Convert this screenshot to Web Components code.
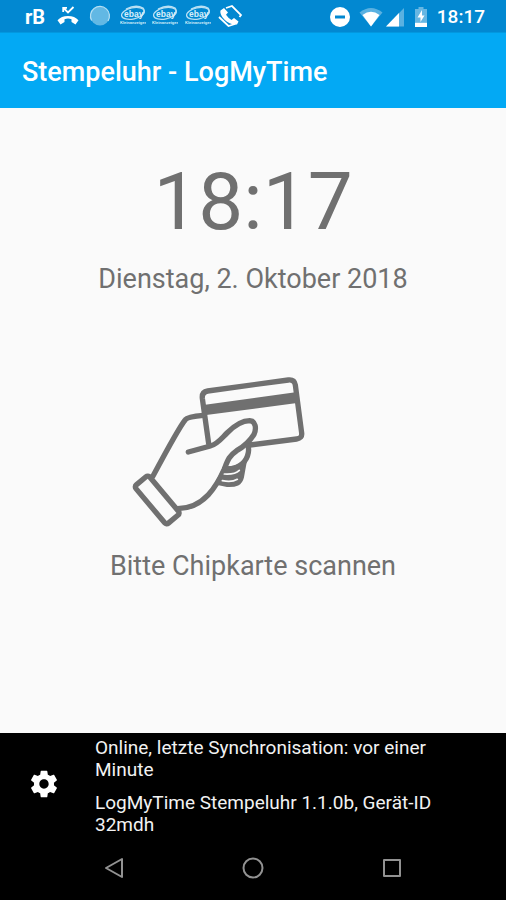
<!DOCTYPE html>
<html lang="de">
<head>
<meta charset="utf-8">
<meta name="viewport" content="width=device-width, initial-scale=1">
<title>Stempeluhr - LogMyTime</title>
<style>
body { margin: 0; background: #fafafa; font-family: Roboto, "Liberation Sans", sans-serif; }
</style>
</head>
<body>
<time-clock-app></time-clock-app>
<script>
const define = (name, html) => {
  const template = document.createElement('template');
  template.innerHTML = html;
  customElements.define(name, class extends HTMLElement {
    constructor() {
      super();
      this.attachShadow({ mode: 'open' }).append(template.content.cloneNode(true));
    }
  });
};

define('ebay-badge', `
<style>
:host { display: block; }
svg { display: block; width: 26px; height: 22px; }
text { font-family: "Liberation Sans", sans-serif; fill: #d9effa; }
</style>
<svg viewBox="0 0 26 22">
  <g fill="none" stroke="#b9e0f4" stroke-width="1.3">
    <ellipse cx="13" cy="8.4" rx="11.6" ry="5.6" transform="rotate(-12 13 8.4)"/>
    <path d="M6 4Q16-1 23 3Q26 7 20 12"/>
  </g>
  <text x="4" y="11.5" font-size="8.5" font-weight="700">ebay</text>
  <text x="0" y="19" font-size="4" font-weight="700">Kleinanzeigen</text>
</svg>`);

define('status-bar', `
<style>
:host { display: flex; justify-content: space-between; align-items: center; height: 32px; padding: 0 21px 0 22px; background: #0288d1; color: #fff; }
.notes { display: flex; justify-content: space-between; align-items: center; width: 221px; }
.notes > * { flex: none; width: 26px; text-align: center; }
.system { display: flex; align-items: center; gap: 5px; padding-top: 2px; }
svg { display: block; fill: currentColor; }
.rb { font-size: 20px; font-weight: 700; line-height: 22px; padding-top: 2px; }
time { font-size: 19px; line-height: 24px; font-weight: 500; }
</style>
<div class="notes">
  <span class="rb">rB</span>
  <svg height="22" viewBox="0 0 26 22"><path d="M13 11C8.500 11 5 12.500 2.500 15.300L5.500 19.500L9.500 17V14.200Q13 13 16.500 14.200V17L20.500 19.500L23.500 15.300C21 12.500 17.500 11 13 11Z"/><path d="M8.200 7V2.800H12M8.500 3L13 7.500L18.500 2" fill="none" stroke="currentColor" stroke-width="1.800"/></svg>
  <svg height="22" viewBox="0 0 26 22"><circle cx="13" cy="11" r="9.500" fill="#62b8e4"/><path d="M4.600 15.500A9.500 9.500 0 1 1 21 16" fill="none" stroke="#b5dff3" stroke-width="1.200"/></svg>
  <ebay-badge></ebay-badge>
  <ebay-badge></ebay-badge>
  <ebay-badge></ebay-badge>
  <svg height="24" viewBox="0 0 26 24"><path d="M9 4L15 2L24 11L22.500 13M2 13L11.500 22L18 20" fill="none" stroke="currentColor" stroke-width="1.800"/><path d="M3.500 6.500L7 4L11 8.500L9 10.800Q11 14 14.500 16L17 14L21.500 17.500L20 20.500C12.500 22 2 12.500 3.500 6.500Z"/></svg>
</div>
<div class="system">
  <svg width="22" height="22" viewBox="0 0 22 22"><path fill-rule="evenodd" d="M11 1A10 10 0 1 0 11 21A10 10 0 1 0 11 1ZM6 9.500H16V12.500H6Z"/></svg>
  <svg width="28" height="22" viewBox="0 0 28 22"><path d="M3.500 6.500Q15-2.500 26.500 6.500L15 20.500Z" opacity=".35"/><path d="M6.500 9Q15 2.500 23.500 9L15 20.500Z"/></svg>
  <svg width="16" height="22" viewBox="4 0 16 22" overflow="visible"><path d="M19 2V20.500H1Z" opacity=".35"/><path d="M14 7V20.500H1Z"/></svg>
  <svg width="22" height="22" viewBox="0 0 22 22"><path d="M5 3H8.500V1H13.500V3H17V16H5Z" opacity=".4"/><path d="M5 16.500H17V21H5ZM12 4L7.500 11.500H10.500V16L14.500 9.500H12Z"/></svg>
  <time>18:17</time>
</div>`);

define('app-bar', `
<style>
:host { display: flex; align-items: center; height: 76px; padding: 0 22px; background: #03a9f4; color: #fff; box-shadow: inset 0 1px #0298df; }
h1 { margin: 0; padding-top: 4px; font-size: 27px; line-height: 32px; font-weight: 500; }
</style>
<h1><slot></slot></h1>`);

define('card-illustration', `
<style>
:host { display: block; }
svg { display: block; width: 266px; height: 170px; }
</style>
<svg viewBox="0 0 798 510" fill="none" stroke="#707070" stroke-width="16" stroke-linecap="round" stroke-linejoin="round" role="img" aria-label="Hand mit Chipkarte">
  <path d="M266 236L247 100Q245 81 263 78L505 45Q523 43 526 60L545 204Q547 220 530 222L390 240"/>
  <path d="M250 120L532 81L537 113L253 151Z" fill="#707070" stroke="none"/>
  <path d="M250 151Q203 155 196 164Q178 185 99 333M205 261L271 243C292 238 303 222 321 204C344 181 369 167 389 167C407 168 410 190 402 208C389 229 376 242 350 257C326 273 322 289 313 312C291 361 253 430 173 431"/>
  <rect x="-27" y="-74" width="54" height="150" rx="8" transform="translate(111 404) rotate(-40)"/>
  <path d="M385 244C389 270 376 296 349 307C333 313 324 312 314 312"/>
  <path d="M376 286L367 336C362 357 348 362 322 361L290 354L314 308L345 311Z" fill="#707070" stroke-width="10"/>
  <path d="M313 327Q345 329 358 316M307 347Q335 353 352 343" stroke="#fafafa" stroke-width="5"/>
</svg>`);

define('clock-panel', `
<style>
:host { display: flex; flex-direction: column; align-items: center; flex: 1; padding: 46px 16px 32px; color: #707070; text-align: center; }
.clock { font-size: 80px; line-height: 96px; }
.date { margin-top: 12px; }
.date, p { font-size: 27px; line-height: 34px; }
card-illustration { margin-top: 69px; }
p { margin: 14px 0 0; }
</style>
<time class="clock">18:17</time>
<time class="date" datetime="2018-10-02">Dienstag, 2. Oktober 2018</time>
<card-illustration></card-illustration>
<p>Bitte Chipkarte scannen</p>`);

define('sync-footer', `
<style>
:host { display: flex; align-items: center; gap: 35px; padding: 4px 64px 0 28px; background: #000; color: #f2f2f2; }
button { flex: none; border: 0; padding: 0 0 6px; background: none; color: #fff; }
svg { display: block; fill: currentColor; }
p { margin: 0; font-size: 19px; line-height: 22px; }
p + p { margin-top: 11px; }
</style>
<button type="button" aria-label="Einstellungen"><svg width="32" height="32" viewBox="0 0 24 24"><path d="M19.430 12.980c.04-.32.07-.64.07-.98s-.03-.66-.07-.98l2.110-1.650c.19-.15.24-.42.12-.64l-2-3.460c-.12-.22-.39-.3-.61-.22l-2.490 1c-.52-.4-1.080-.73-1.690-.98l-.38-2.650C14.460 2.180 14.250 2 14 2h-4c-.25 0-.46.18-.49.42l-.38 2.650c-.61.25-1.170.59-1.690.98l-2.490-1c-.23-.09-.49 0-.61.22l-2 3.460c-.13.22-.07.49.12.64l2.110 1.650c-.04.32-.07.65-.07.98s.03.66.07.98l-2.110 1.650c-.19.15-.24.42-.12.64l2 3.460c.12.22.39.3.61.22l2.490-1c.52.4 1.080.73 1.690.98l.38 2.650c.03.24.24.42.49.42h4c.25 0 .46-.18.49-.42l.38-2.650c.61-.25 1.170-.59 1.690-.98l2.490 1c.23.09.49 0 .61-.22l2-3.460c.12-.22.07-.49-.12-.64l-2.110-1.650zM12 15.500c-1.930 0-3.500-1.570-3.500-3.500s1.570-3.500 3.500-3.500 3.500 1.570 3.500 3.500-1.570 3.500-3.500 3.500z"/></svg></button>
<div>
  <p>Online, letzte Synchronisation: vor einer Minute</p>
  <p>LogMyTime Stempeluhr 1.1.0b, Gerät-ID 32mdh</p>
</div>`);

define('system-nav', `
<style>
:host { display: grid; grid-template-columns: repeat(3, 1fr); align-items: center; height: 64px; padding: 0 45px; background: #000; color: #929292; }
button { display: grid; place-items: center; height: 48px; border: 0; padding: 0; background: none; color: inherit; }
svg { display: block; fill: none; stroke: currentColor; stroke-width: 2; stroke-linejoin: round; }
</style>
<button type="button" aria-label="Zurück"><svg width="24" height="24" viewBox="0 0 24 24"><path d="M20 3V21L4 12Z"/></svg></button>
<button type="button" aria-label="Startseite"><svg width="24" height="24" viewBox="0 0 24 24"><circle cx="12" cy="12" r="9.500"/></svg></button>
<button type="button" aria-label="Übersicht"><svg width="24" height="24" viewBox="0 0 24 24"><rect x="4" y="4" width="16" height="16"/></svg></button>`);

define('time-clock-app', `
<style>
:host { display: flex; flex-direction: column; min-height: 100vh; }
</style>
<status-bar></status-bar>
<app-bar>Stempeluhr - LogMyTime</app-bar>
<clock-panel></clock-panel>
<sync-footer></sync-footer>
<system-nav></system-nav>`);
</script>
</body>
</html>
